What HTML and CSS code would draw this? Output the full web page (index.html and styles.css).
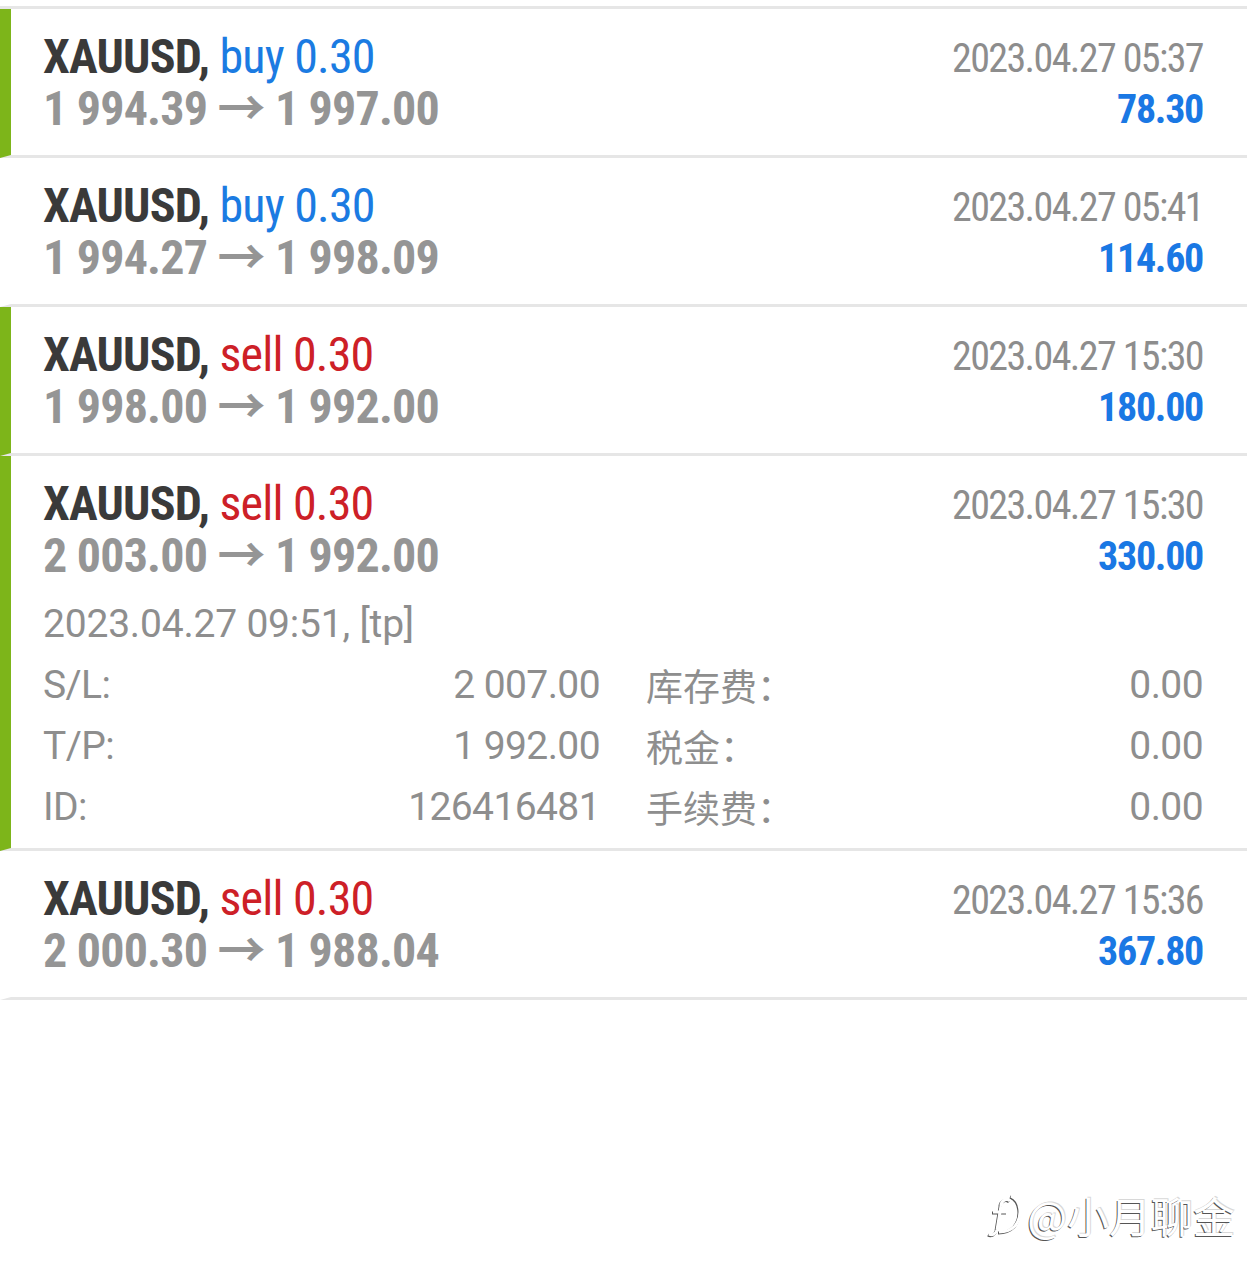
FILE: index.html
```html
<!DOCTYPE html>
<html lang="zh">
<head>
  <meta charset="UTF-8" />
  <title>History</title>
  <meta name="viewport" content="width=device-width, initial-scale=1.0">
  <link rel="stylesheet" href="styles.css">
</head>
<body>
  <div class="history">

    <div class="trade marked">
      <div class="main">
        <div class="left">
          <div class="title">XAUUSD, <span class="buy">buy 0.30</span></div>
          <div class="prices">1 994.39 → 1 997.00</div>
        </div>
        <div class="right">
          <div class="time">2023.04.27 05:37</div>
          <div class="profit">78.30</div>
        </div>
      </div>
    </div>

    <div class="trade">
      <div class="main">
        <div class="left">
          <div class="title">XAUUSD, <span class="buy">buy 0.30</span></div>
          <div class="prices">1 994.27 → 1 998.09</div>
        </div>
        <div class="right">
          <div class="time">2023.04.27 05:41</div>
          <div class="profit">114.60</div>
        </div>
      </div>
    </div>

    <div class="trade marked">
      <div class="main">
        <div class="left">
          <div class="title">XAUUSD, <span class="sell">sell 0.30</span></div>
          <div class="prices">1 998.00 → 1 992.00</div>
        </div>
        <div class="right">
          <div class="time">2023.04.27 15:30</div>
          <div class="profit">180.00</div>
        </div>
      </div>
    </div>

    <div class="trade marked">
      <div class="main">
        <div class="left">
          <div class="title">XAUUSD, <span class="sell">sell 0.30</span></div>
          <div class="prices">2 003.00 → 1 992.00</div>
        </div>
        <div class="right">
          <div class="time">2023.04.27 15:30</div>
          <div class="profit">330.00</div>
        </div>
      </div>
      <div class="details">
        <div class="opened">2023.04.27 09:51, [tp]</div>
        <div class="grid">
          <div class="pair"><span>S/L:</span><span>2 007.00</span></div>
          <div class="pair"><span class="cjk">库存费：</span><span>0.00</span></div>
          <div class="pair"><span>T/P:</span><span>1 992.00</span></div>
          <div class="pair"><span class="cjk">税金：</span><span>0.00</span></div>
          <div class="pair"><span>ID:</span><span>126416481</span></div>
          <div class="pair"><span class="cjk">手续费：</span><span>0.00</span></div>
        </div>
      </div>
    </div>

    <div class="trade">
      <div class="main">
        <div class="left">
          <div class="title">XAUUSD, <span class="sell">sell 0.30</span></div>
          <div class="prices">2 000.30 → 1 988.04</div>
        </div>
        <div class="right">
          <div class="time">2023.04.27 15:36</div>
          <div class="profit">367.80</div>
        </div>
      </div>
    </div>

  </div>

  <div class="watermark">
    <svg class="logo" width="44" height="46" viewBox="0 0 44 46">
      <path d="M30 4 C40 8 42 24 34 34 C30 38 24 40 18 40" fill="none" stroke="#fff" stroke-width="3"/>
      <path d="M20 14 C20 8 26 6 29 9 M20 14 L16 38 C15 42 11 44 8 42 M12 20 L26 20" fill="none" stroke="#fff" stroke-width="3"/>
    </svg>
    <span>@小月聊金</span>
  </div>
</body>
</html>
```

FILE: styles.css
```css
body {
  margin: 0;
  background: #fff;
  font-family: "Roboto Condensed", Roboto, "Noto Sans CJK SC", sans-serif;
  color: #3c3c3c;
}

.history {
  margin-top: 6px;
  border-top: 3px solid #e6e6e6;
}

.trade {
  border-bottom: 3px solid #e6e6e6;
  border-left: 11px solid #fff;
  padding: 0 44px 0 32px;
}

.trade.marked {
  border-left-color: #7db51a;
}

.main {
  display: flex;
  justify-content: space-between;
  padding: 22px 0 20px;
}

.title,
.prices {
  font-size: 48px;
  line-height: 52px;
  letter-spacing: -0.8px;
  white-space: nowrap;
}

.title {
  font-weight: bold;
  color: #3a3a3a;
}

.title .buy,
.title .sell {
  font-weight: normal;
}

.buy {
  color: #1b7be2;
}

.sell {
  color: #cd2027;
}

.prices {
  font-weight: bold;
  color: #959595;
}

.right {
  text-align: right;
}

.time {
  font-size: 40px;
  line-height: 52px;
  letter-spacing: -1.6px;
  color: #8d8d8d;
  padding-top: 2px;
}

.profit {
  font-size: 40px;
  line-height: 50px;
  letter-spacing: -1.3px;
  font-weight: bold;
  color: #1a78e4;
}

.details {
  font-family: Roboto, "Noto Sans CJK SC", sans-serif;
  color: #8e8e8e;
  font-size: 39px;
  letter-spacing: -0.6px;
  padding-bottom: 10px;
  margin-top: -9px;
}

.opened {
  line-height: 62px;
  letter-spacing: -0.2px;
}

.grid {
  display: grid;
  grid-template-columns: 1fr 1fr;
  column-gap: 46px;
}

.pair {
  display: flex;
  justify-content: space-between;
  line-height: 61px;
}

.cjk {
  font-family: "Noto Sans CJK SC", sans-serif;
  font-size: 37px;
  letter-spacing: 0;
}

.watermark {
  display: flex;
  align-items: center;
  justify-content: flex-end;
  gap: 2px;
  margin: 184px 12px 0 0;
  font-family: "Noto Sans CJK SC", sans-serif;
  font-size: 42px;
  color: #fff;
  text-shadow: -1px 1px 0 #555, 1px -1px 0 #d8d8d8;
}

.logo {
  filter: drop-shadow(-1px 1px 0 #555);
}
```
